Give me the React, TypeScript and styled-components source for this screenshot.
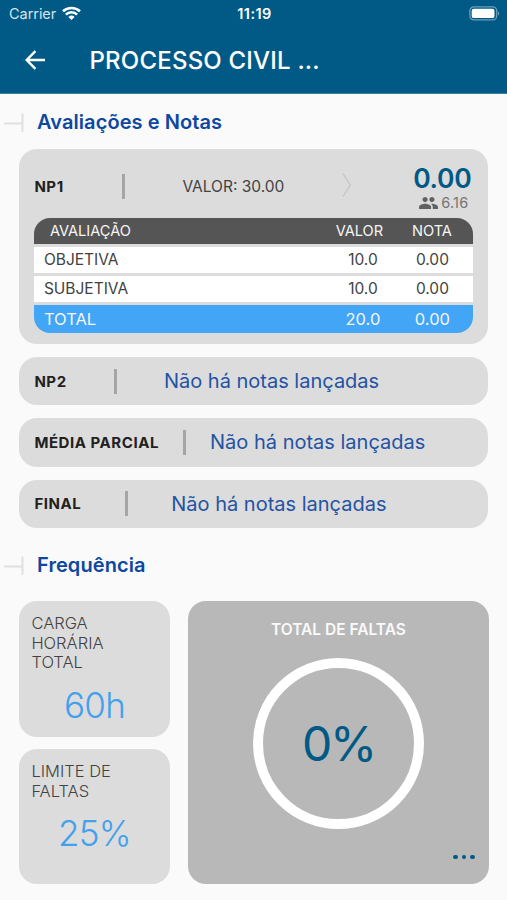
import React from "react";
import styled, { createGlobalStyle } from "styled-components";

const GlobalStyle = createGlobalStyle`
  * { box-sizing: border-box; }
  body { margin: 0; background: #fafafa; }
`;

const Screen = styled.div`
  width: 507px;
  height: 900px;
  overflow: hidden;
  background: #fafafa;
  font-family: Inter, sans-serif;
  color: #424242;
`;

const Header = styled.header`
  height: 94px;
  background: #015a86;
  border-bottom: 1px solid #3a7ea0;
  color: #fff;
`;

const StatusBar = styled.div`
  display: grid;
  grid-template-columns: 1fr auto 1fr;
  align-items: center;
  height: 27px;
  padding: 0 7px 0 9px;
`;

const Carrier = styled.div`
  display: flex;
  align-items: center;
  gap: 6px;
  font-size: 14.5px;
  letter-spacing: -0.05px;
  color: #d3e3ec;
`;

const Clock = styled.div`
  font-size: 14.5px;
  font-weight: 600;
  letter-spacing: 0.45px;
`;

const BatterySlot = styled.div`
  display: flex;
  justify-content: flex-end;
`;

const TitleBar = styled.div`
  display: flex;
  align-items: center;
  height: 66px;
  padding-left: 25px;
`;

const Title = styled.h1`
  margin: 0 0 0 43.5px;
  font-size: 24px;
  font-weight: 500;
  letter-spacing: 0.2px;
  white-space: nowrap;
`;

const SectionHeading = styled.div<{ $height: number }>`
  display: flex;
  align-items: center;
  gap: 13px;
  height: ${(p) => p.$height}px;
  padding-left: 4px;
`;

const SectionTitle = styled.h2`
  margin: 0;
  font-size: 20px;
  font-weight: 600;
  line-height: 24px;
  letter-spacing: 0.08px;
  color: #0d47a1;
`;

const GradeList = styled.div`
  display: flex;
  flex-direction: column;
  gap: 13px;
  padding: 0 18.6px 0 19.4px;
`;

const GradeCard = styled.section`
  padding: 0 15px 12px;
  height: 195px;
  border-radius: 18px;
  background: #dcdcdc;
`;

const GradeRow = styled.div<{ $height: number }>`
  display: flex;
  align-items: center;
  justify-content: space-between;
  height: ${(p) => p.$height}px;
`;

const EmptyCard = styled(GradeRow)`
  padding: 0 15px;
  border-radius: 18px;
  background: #dcdcdc;
`;

const GradeName = styled.span`
  font-size: 15px;
  font-weight: 700;
  letter-spacing: 0.55px;
  white-space: nowrap;
  color: #212121;
`;

const Divider = styled.span`
  width: 3px;
  height: 25px;
  background: #a5a5a5;
`;

const EmptyText = styled.span`
  font-size: 20px;
  letter-spacing: 0;
  white-space: nowrap;
  color: #2453a3;
`;

const MaxValue = styled.span`
  font-size: 15.5px;
  white-space: nowrap;
`;

const Score = styled.div`
  display: flex;
  flex-direction: column;
  align-items: flex-end;
  padding-right: 2px;
`;

const ScoreValue = styled.div`
  font-size: 26.5px;
  line-height: 32px;
  font-weight: 600;
  letter-spacing: -0.3px;
  color: #015a86;
`;

const ClassAverage = styled.div`
  display: flex;
  align-items: center;
  gap: 3px;
  padding-right: 3px;
  font-size: 14.5px;
  line-height: 18px;
  letter-spacing: 0.2px;
  color: #757575;
`;

const Table = styled.div`
  display: flex;
  flex-direction: column;
  gap: 3px;
  height: 115px;
  margin-top: -6px;
  overflow: hidden;
  border-radius: 16px;
`;

const TableRow = styled.div<{ $kind?: "head" | "total" }>`
  display: grid;
  grid-template-columns: 1fr ${(p) => (p.$kind === "head" ? "62px 83px" : "57px 82px")};
  align-items: center;
  flex: ${(p) => (p.$kind === "total" ? "0 0 28px" : "0 0 26px")};
  line-height: 24px;
  padding-left: ${(p) => (p.$kind === "head" ? 15.5 : 9.5)}px;
  background: ${(p) => (p.$kind === "head" ? "#555" : p.$kind === "total" ? "#42a5f5" : "#fff")};
  color: ${(p) => (p.$kind ? "#f5f5f5" : "#424242")};
  font-size: ${(p) => (p.$kind === "total" ? 16.5 : p.$kind === "head" ? 14.6 : 15.5)}px;
`;

const NumberCell = styled.span`
  text-align: center;
`;

const Attendance = styled.div`
  display: grid;
  grid-template-columns: 150.2px 300.8px;
  grid-template-rows: 135.3px 135.3px;
  gap: 12.5px 18.5px;
  padding-left: 19.4px;
`;

const InfoCard = styled.section`
  padding: 13px 12px 12px;
  border-radius: 18px;
  background: #dcdcdc;
`;

const InfoLabel = styled.div`
  font-size: 16.5px;
  font-weight: 300;
  line-height: 19.5px;
  white-space: pre-line;
`;

const InfoValue = styled.div`
  margin-top: 12.4px;
  text-align: center;
  font-size: 35px;
  line-height: 40px;
  font-weight: 300;
  letter-spacing: -0.7px;
  color: #42a0ee;
`;

const AbsenceCard = styled.section`
  grid-column: 2;
  grid-row: 1 / 3;
  display: flex;
  flex-direction: column;
  align-items: center;
  padding-top: 19px;
  border-radius: 18px;
  background: #b8b8b8;
`;

const AbsenceTitle = styled.div`
  font-size: 15.5px;
  font-weight: 600;
  line-height: 20px;
  color: #fafafa;
`;

const Ring = styled.div`
  display: flex;
  align-items: center;
  justify-content: center;
  width: 171px;
  height: 171px;
  margin-top: 18px;
  border: 10px solid #fff;
  border-radius: 50%;
  font-size: 48px;
  letter-spacing: -2.2px;
  color: #015a86;
`;

const MoreButton = styled.button`
  display: flex;
  gap: 4px;
  align-self: flex-end;
  margin: 25.5px 14px 0 0;
  padding: 0;
  border: 0;
  background: none;
`;

const Dot = styled.span`
  width: 4.6px;
  height: 4.6px;
  border-radius: 50%;
  background: #015a86;
`;

const ChevronSlot = styled.span`
  display: flex;
  margin-right: 3px;
`;

const WifiIcon = () => (
  <svg width="19" height="15" viewBox="0 0 19 15" fill="none" stroke="#fff" strokeWidth="2.6">
    <path d="M1 5.3a12.4 12.4 0 0 1 17 0" />
    <path d="M3.9 8.6a8 8 0 0 1 11.2 0" />
    <path d="M9.5 14 6.4 10.9a4.4 4.4 0 0 1 6.2 0Z" fill="#fff" stroke="none" />
  </svg>
);

const BatteryIcon = () => (
  <svg width="31" height="15" viewBox="0 0 31 15">
    <rect x="0.9" y="0.9" width="26.8" height="13" rx="4" fill="none" stroke="#6b9fba" strokeWidth="1.3" />
    <rect x="2.7" y="2.7" width="22.8" height="9.4" rx="2.2" fill="#fff" />
    <path d="M29 5.2c1.6.8 1.6 3.6 0 4.4Z" fill="#6b9fba" />
  </svg>
);

const BackIcon = () => (
  <svg width="21" height="20" viewBox="0 0 21 20" fill="none" stroke="#fff" strokeWidth="2.4">
    <path d="M20 10H2.2M10.4 1.2 1.7 10l8.7 8.8" />
  </svg>
);

const BranchIcon = () => (
  <svg width="20" height="20" viewBox="0 0 20 20" fill="none" stroke="#e0e0e0" strokeWidth="2">
    <path d="M0 11.5h18.5M18.5 1.5v18.5" />
  </svg>
);

const ChevronIcon = () => (
  <svg width="10" height="28" viewBox="0 0 10 28" fill="none" stroke="#c2c2c2" strokeWidth="1.2">
    <path d="M1 0.5l7.2 11.5L1 23.5" />
  </svg>
);

const PeopleIcon = () => (
  <svg width="19" height="12" viewBox="1 5 22 14" fill="#616161">
    <path d="M16 11c1.66 0 2.99-1.34 2.99-3S17.66 5 16 5s-3 1.34-3 3 1.34 3 3 3zm-8 0c1.66 0 2.99-1.34 2.99-3S9.66 5 8 5 5 6.34 5 8s1.34 3 3 3zm0 2c-2.33 0-7 1.17-7 3.5V19h14v-2.5c0-2.33-4.67-3.5-7-3.5zm8 0c-.29 0-.62.02-.97.05 1.16.84 1.97 1.97 1.97 3.45V19h6v-2.5c0-2.33-4.67-3.5-7-3.5z" />
  </svg>
);

const assessments = [
  { name: "OBJETIVA", value: "10.0", score: "0.00" },
  { name: "SUBJETIVA", value: "10.0", score: "0.00" },
];

const pendingGrades = ["NP2", "MÉDIA PARCIAL", "FINAL"];

export default function App() {
  return (
    <Screen>
      <GlobalStyle />
      <Header>
        <StatusBar>
          <Carrier>Carrier <WifiIcon /></Carrier>
          <Clock>11:19</Clock>
          <BatterySlot><BatteryIcon /></BatterySlot>
        </StatusBar>
        <TitleBar>
          <BackIcon />
          <Title>PROCESSO CIVIL ...</Title>
        </TitleBar>
      </Header>

      <SectionHeading $height={55}>
        <BranchIcon />
        <SectionTitle>Avaliações e Notas</SectionTitle>
      </SectionHeading>

      <GradeList>
        <GradeCard>
          <GradeRow $height={75}>
            <GradeName>NP1</GradeName>
            <Divider />
            <MaxValue>VALOR: 30.00</MaxValue>
            <ChevronSlot><ChevronIcon /></ChevronSlot>
            <Score>
              <ScoreValue>0.00</ScoreValue>
              <ClassAverage><PeopleIcon />6.16</ClassAverage>
            </Score>
          </GradeRow>
          <Table>
            <TableRow $kind="head">
              <span>AVALIAÇÃO</span>
              <NumberCell>VALOR</NumberCell>
              <NumberCell>NOTA</NumberCell>
            </TableRow>
            {assessments.map((item) => (
              <TableRow key={item.name}>
                <span>{item.name}</span>
                <NumberCell>{item.value}</NumberCell>
                <NumberCell>{item.score}</NumberCell>
              </TableRow>
            ))}
            <TableRow $kind="total">
              <span>TOTAL</span>
              <NumberCell>20.0</NumberCell>
              <NumberCell>0.00</NumberCell>
            </TableRow>
          </Table>
        </GradeCard>
        {pendingGrades.map((name) => (
          <EmptyCard key={name} $height={48.3}>
            <GradeName>{name}</GradeName>
            <Divider />
            <EmptyText>Não há notas lançadas</EmptyText>
            <span />
            <span />
          </EmptyCard>
        ))}
      </GradeList>

      <SectionHeading $height={73.4}>
        <BranchIcon />
        <SectionTitle>Frequência</SectionTitle>
      </SectionHeading>

      <Attendance>
        <InfoCard>
          <InfoLabel>{"CARGA\nHORÁRIA\nTOTAL"}</InfoLabel>
          <InfoValue>60h</InfoValue>
        </InfoCard>
        <InfoCard>
          <InfoLabel>{"LIMITE DE\nFALTAS"}</InfoLabel>
          <InfoValue>25%</InfoValue>
        </InfoCard>
        <AbsenceCard>
          <AbsenceTitle>TOTAL DE FALTAS</AbsenceTitle>
          <Ring>0%</Ring>
          <MoreButton aria-label="Mais detalhes">
            <Dot /><Dot /><Dot />
          </MoreButton>
        </AbsenceCard>
      </Attendance>
    </Screen>
  );
}
